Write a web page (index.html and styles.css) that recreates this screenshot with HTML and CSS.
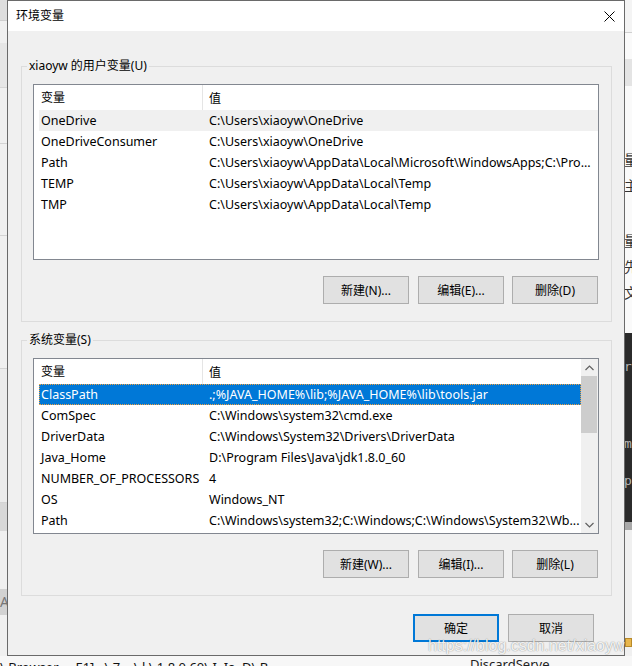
FILE: index.html
```html
<!DOCTYPE html>
<html lang="zh-CN">
<head>
<meta charset="utf-8">
<title>环境变量</title>
<link rel="stylesheet" href="styles.css">
</head>
<body>
<div class="desk">
  <div class="bg-left">
    <div class="bl-a"></div>
    <div class="bl-b"></div>
    <div class="bl-c"></div>
    <div class="bl-d"></div>
    <div class="bl-e"></div>
    <div class="bl-f"></div>
    <div class="bl-g"></div>
    <div class="bl-g2"></div>
    <div class="bl-h">A</div>
    <div class="bl-i"></div>
  </div>
  <div class="bg-right">
    <div class="br-a"></div>
    <div class="br-b"></div>
    <div class="br-text">
      <div class="br-t1">量</div>
      <div class="br-t2">主</div>
      <div class="br-t3">量</div>
      <div class="br-t2">先</div>
      <div class="br-t2">文</div>
    </div>
    <div class="br-dark">
      <div class="bd-1">r</div>
      <div class="bd-2">m</div>
      <div class="bd-3">p</div>
    </div>
    <div class="br-c"></div>
    <div class="br-d"><span class="folder"></span></div>
  </div>
  <div class="bg-bottom">
    <span class="bb-1">\ Browser&nbsp;&nbsp;&nbsp;&nbsp;&nbsp;E1]&nbsp;&nbsp;&nbsp;\ 7&nbsp;&nbsp;&nbsp;&nbsp;\ l \ 1.8 0 60\ I&nbsp;&nbsp;Ia&nbsp;&nbsp;D\ B</span>
    <span class="bb-2">DiscardServe</span>
  </div>

  <div class="dialog">
    <div class="titlebar">
      <span class="title">环境变量</span>
      <svg class="close" width="11" height="11" viewBox="0 0 11 11"><path d="M0.5 0.5 L10.5 10.5 M10.5 0.5 L0.5 10.5" stroke="#000" stroke-width="1" fill="none"/></svg>
    </div>
    <div class="dbody">
      <fieldset class="group">
        <legend>xiaoyw 的用户变量(U)</legend>
        <div class="list">
          <div class="lbody">
            <div class="lhead"><div class="c1">变量</div><div class="c2">值</div></div>
            <div class="row hover"><div class="c1">OneDrive</div><div class="c2">C:\Users\xiaoyw\OneDrive</div></div>
            <div class="row"><div class="c1">OneDriveConsumer</div><div class="c2">C:\Users\xiaoyw\OneDrive</div></div>
            <div class="row"><div class="c1">Path</div><div class="c2">C:\Users\xiaoyw\AppData\Local\Microsoft\WindowsApps;C:\Pro...</div></div>
            <div class="row"><div class="c1">TEMP</div><div class="c2">C:\Users\xiaoyw\AppData\Local\Temp</div></div>
            <div class="row"><div class="c1">TMP</div><div class="c2">C:\Users\xiaoyw\AppData\Local\Temp</div></div>
          </div>
        </div>
        <div class="btns">
          <button class="btn">新建(N)...</button>
          <button class="btn">编辑(E)...</button>
          <button class="btn">删除(D)</button>
        </div>
      </fieldset>

      <fieldset class="group group2">
        <legend>系统变量(S)</legend>
        <div class="list">
          <div class="lbody">
            <div class="lhead"><div class="c1">变量</div><div class="c2">值</div></div>
            <div class="row sel"><div class="c1">ClassPath</div><div class="c2">.;%JAVA_HOME%\lib;%JAVA_HOME%\lib\tools.jar</div></div>
            <div class="row"><div class="c1">ComSpec</div><div class="c2">C:\Windows\system32\cmd.exe</div></div>
            <div class="row"><div class="c1">DriverData</div><div class="c2">C:\Windows\System32\Drivers\DriverData</div></div>
            <div class="row"><div class="c1">Java_Home</div><div class="c2">D:\Program Files\Java\jdk1.8.0_60</div></div>
            <div class="row"><div class="c1">NUMBER_OF_PROCESSORS</div><div class="c2">4</div></div>
            <div class="row"><div class="c1">OS</div><div class="c2">Windows_NT</div></div>
            <div class="row"><div class="c1">Path</div><div class="c2">C:\Windows\system32;C:\Windows;C:\Windows\System32\Wb...</div></div>
          </div>
          <div class="vscroll">
            <div class="arrow">
              <svg width="9" height="6" viewBox="0 0 9 6"><path d="M0.5 5 L4.5 1 L8.5 5" stroke="#606060" stroke-width="1.2" fill="none"/></svg>
            </div>
            <div class="track"><div class="thumb"></div></div>
            <div class="arrow">
              <svg width="9" height="6" viewBox="0 0 9 6"><path d="M0.5 1 L4.5 5 L8.5 1" stroke="#606060" stroke-width="1.2" fill="none"/></svg>
            </div>
          </div>
        </div>
        <div class="btns">
          <button class="btn">新建(W)...</button>
          <button class="btn">编辑(I)...</button>
          <button class="btn">删除(L)</button>
        </div>
      </fieldset>

      <div class="footer">
        <button class="btn default">确定</button>
        <button class="btn">取消</button>
      </div>
    </div>
  </div>

  <div class="watermark">https://blog.csdn.net/xiaoyw</div>
</div>
</body>
</html>
```

FILE: styles.css
```css
* { box-sizing: border-box; }
html, body { margin: 0; padding: 0; }
body {
  width: 632px;
  height: 666px;
  overflow: hidden;
  background: #f0f0f0;
  font-family: "Noto Sans", "Noto Sans CJK SC", sans-serif;
  font-size: 12px;
  color: #000;
}
.desk {
  position: relative;
  width: 632px;
  height: 666px;
  overflow: hidden;
  background: #f0f0f0;
}

/* ---------- background windows ---------- */
.bg-left {
  position: absolute;
  left: 0; top: 0;
  width: 8px; height: 666px;
  display: flex;
  flex-direction: column;
  background: #f0f0f0;
  overflow: hidden;
}
.bl-a { height: 21px; background: #dedede; border-bottom: 1px solid #cfcfcf; flex: none; }
.bl-b { height: 22px; flex: none; }
.bl-c { height: 45px; background: #e6e6e6; border-bottom: 1px solid #d6d6d6; flex: none; }
.bl-d { height: 56px; border-bottom: 1px solid #d4d4d4; flex: none; }
.bl-e { height: 92px; border-bottom: 1px solid #d4d4d4; flex: none; }
.bl-f { height: 133px; border-bottom: 1px solid #d4d4d4; flex: none; }
.bl-g { height: 134px; border-bottom: 1px solid #d4d4d4; background: #ececec; flex: none; }
.bl-g2 { height: 28px; background: #d8d8d8; flex: none; }
.bl-h {
  height: 26px;
  background: #d2d2d2;
  color: #777;
  font-size: 14px;
  line-height: 26px;
  margin-top: 58px;
  flex: none;
}
.bl-i { flex: 1; }

.bg-right {
  position: absolute;
  left: 625px; top: 0;
  width: 7px; height: 666px;
  display: flex;
  flex-direction: column;
  background: #fafafa;
  overflow: hidden;
}
.br-a { height: 33px; background: #f4f4f4; border-bottom: 1px solid #d0d0d0; flex: none; }
.br-b { height: 27px; margin-top: 26px; background: #e4e4e4; flex: none; }
.br-text {
  height: 247px;
  flex: none;
  padding-top: 60px;
  font-family: "Noto Sans CJK SC", sans-serif;
  font-size: 14px;
  color: #333;
  line-height: 26px;
  margin-left: -1px;
}
.br-t3 { margin-top: 29px; }
.br-dark {
  height: 189px;
  flex: none;
  background: #2b2b2b;
  color: #b5b5b5;
  font-family: "DejaVu Sans Mono", monospace;
  font-size: 13px;
  padding-top: 26px;
  margin-left: -1px;
}
.bd-2 { margin-top: 62px; }
.bd-3 { margin-top: 22px; }
.br-c { height: 8px; background: #a8a8a8; flex: none; }
.br-d { flex: 1; background: #f0f0f0; position: relative; }
.folder {
  position: absolute;
  left: 0; top: 108px;
  width: 7px; height: 9px;
  background: #e8b64c;
  border: 1px solid #b88a2a;
}

.bg-bottom {
  position: absolute;
  left: 0; top: 656px;
  width: 632px; height: 10px;
  background: #f7f7f7;
  overflow: hidden;
  white-space: nowrap;
  font-size: 13px;
  line-height: 16px;
}
.bb-1 { position: absolute; left: 0; top: 3px; color: #111; }
.bb-2 { position: absolute; left: 470px; top: 0; color: #222; }

/* ---------- dialog ---------- */
.dialog {
  position: absolute;
  left: 7px; top: 0;
  width: 618px; height: 656px;
  border: 1px solid #6a6a6a;
  background: #f0f0f0;
  display: flex;
  flex-direction: column;
}
.titlebar {
  height: 30px;
  background: #fff;
  display: flex;
  align-items: center;
  justify-content: space-between;
  padding: 0 9px 0 8px;
  flex: none;
}
.title { font-size: 12px; line-height: 16px; }
.close { display: block; }

.dbody {
  flex: 1;
  padding: 27px 12px 0 13px;
  display: flex;
  flex-direction: column;
}
.group {
  margin: 0;
  padding: 10px 12px 17px 11px;
  border: 1px solid #dcdcdc;
  min-width: 0;
}
.group legend {
  padding: 0 2px;
  margin-left: -6px;
  font-size: 12px;
  line-height: 16px;
}
.group2 { margin-top: 10px; }

.list {
  height: 176px;
  border: 1px solid #828790;
  background: #fff;
  display: flex;
}
.lbody {
  flex: 1;
  min-width: 0;
  padding-left: 5px;
  overflow: hidden;
}
.lhead {
  height: 25px;
  display: flex;
  align-items: center;
}
.row {
  height: 21px;
  display: flex;
  align-items: center;
  white-space: nowrap;
  font-size: 12.5px;
}
.c1 {
  width: 164px;
  flex: none;
  padding-left: 2px;
  overflow: hidden;
}
.c2 {
  flex: 1;
  min-width: 0;
  padding-left: 6px;
  overflow: hidden;
}
.lhead .c1 { height: 25px; line-height: 25px; border-right: 1px solid #e5e5e5; }
.lhead .c2 { padding-left: 6px; }
.row.hover { background: #f0f0f0; }
.row.sel {
  background: #0078d7;
  color: #fff;
  outline: 1px dotted #f0a040;
  outline-offset: -1px;
}

.vscroll {
  width: 17px;
  flex: none;
  background: #f0f0f0;
  display: flex;
  flex-direction: column;
}
.arrow {
  height: 17px;
  display: flex;
  align-items: center;
  justify-content: center;
}
.arrow svg { display: block; }
.track { flex: 1; }
.thumb { height: 57px; background: #cdcdcd; margin-right: 1px; }

.btns {
  display: flex;
  justify-content: flex-end;
  margin-top: 16px;
  padding-right: 1px;
}
.btn {
  width: 86px;
  height: 28px;
  border: 1px solid #adadad;
  background: #e1e1e1;
  font-family: "Noto Sans", "Noto Sans CJK SC", sans-serif;
  font-size: 12px;
  color: #000;
  padding: 0;
  margin: 0;
}
.btns .btn:nth-child(1) { margin-right: 9px; }
.btns .btn:nth-child(2) { margin-right: 8px; }

.footer {
  display: flex;
  justify-content: flex-end;
  margin-top: 18px;
  margin-right: 18px;
  gap: 9px;
}
.btn.default { border: 2px solid #0078d7; }

.watermark {
  position: absolute;
  left: 428px;
  top: 637px;
  font-family: "Liberation Sans", sans-serif;
  font-size: 16px;
  color: rgba(255, 255, 255, 0.9);
  text-shadow: 0 0 1px rgba(0, 0, 0, 0.4), 0 0 2px rgba(0, 0, 0, 0.15);
  white-space: nowrap;
}
```
